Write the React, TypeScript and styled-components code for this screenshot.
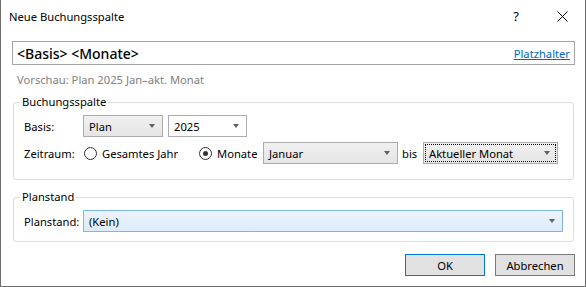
import React from "react";
import styled, { createGlobalStyle } from "styled-components";

const GlobalStyle = createGlobalStyle`
  html, body {
    margin: 0;
    padding: 0;
    background: #ffffff;
  }
  body {
    font-family: "Noto Sans", "Liberation Sans", sans-serif;
    font-size: 11.2px;
    color: #000000;
  }
`;

type Variant = "gray" | "white" | "hot";

export default function App() {
  return (
    <>
      <GlobalStyle />
      <Window>
        {/* title bar */}
        <TitleBar>
          <Title>Neue Buchungsspalte</Title>
          <CaptionButton>?</CaptionButton>
          <CaptionButton>
            <svg width="11" height="11" viewBox="0 0 11 11">
              <path d="M0.5 0.5 L10.5 10.5 M10.5 0.5 L0.5 10.5" stroke="#000" strokeWidth="1" fill="none" />
            </svg>
          </CaptionButton>
        </TitleBar>

        <Content>
          {/* template */}
          <TemplateBox>
            <TemplateText>&lt;Basis&gt; &lt;Monate&gt;</TemplateText>
            <Link>Platzhalter</Link>
          </TemplateBox>
          <Preview>Vorschau: Plan 2025 Jan–akt. Monat</Preview>

          {/* group: Buchungsspalte */}
          <Group $pad="5px 10px 15px 10px" $top={6}>
            <Legend>Buchungsspalte</Legend>
            <Row>
              <FieldLabel>Basis:</FieldLabel>
              <ComboPair>
                <ComboBox $variant="gray" $width={80}>
                  Plan
                  <Arrow />
                </ComboBox>
                <ComboBox $variant="white" $width={79}>
                  2025
                  <Arrow />
                </ComboBox>
              </ComboPair>
            </Row>
            <Row $top={5}>
              <FieldLabel>Zeitraum:</FieldLabel>
              <RadioOption $width={115} $indent={1}>
                <Radio />
                Gesamtes Jahr
              </RadioOption>
              <RadioOption $width={64}>
                <Radio $checked />
                Monate
              </RadioOption>
              <ComboBox $variant="gray" $width={135}>
                Januar
                <Arrow />
              </ComboBox>
              <Bis>bis</Bis>
              <ComboBox $variant="gray" $width={135} $focus>
                Aktueller Monat
                <Arrow />
              </ComboBox>
            </Row>
          </Group>

          {/* group: Planstand */}
          <Group $pad="5px 10px 9px 10px" $top={9}>
            <Legend>Planstand</Legend>
            <Row>
              <FieldLabel>Planstand:</FieldLabel>
              <ComboBox $variant="hot">
                (Kein)
                <Arrow />
              </ComboBox>
            </Row>
          </Group>

          <ButtonRow>
            <DialogButton $default>OK</DialogButton>
            <DialogButton>Abbrechen</DialogButton>
          </ButtonRow>
        </Content>
      </Window>
    </>
  );
}

const Window = styled.div`
  box-sizing: border-box;
  width: 586px;
  height: 287px;
  background: #ffffff;
  border: 1px solid #6e6e6e;
  border-top: none;
  display: flex;
  flex-direction: column;
`;

const TitleBar = styled.div`
  height: 32px;
  display: flex;
  align-items: center;
  padding-left: 8px;
`;

const Title = styled.div`
  flex: 1;
  color: #000;
`;

const CaptionButton = styled.div`
  width: 46px;
  height: 32px;
  display: flex;
  align-items: center;
  justify-content: center;
  font-size: 13px;
  color: #000;
`;

const Content = styled.div`
  display: flex;
  flex-direction: column;
  padding: 9px 10px 0 11px;
`;

const TemplateBox = styled.div`
  box-sizing: border-box;
  height: 24px;
  display: flex;
  align-items: center;
  justify-content: space-between;
  border: 1px solid #a5a5a5;
  padding: 0 4px;
`;

const TemplateText = styled.span`
  font-size: 14px;
  font-weight: 500;
  color: #000;
`;

const Link = styled.span`
  color: #0066cc;
  text-decoration: underline;
`;

const Preview = styled.div`
  margin-top: 7px;
  margin-left: 5px;
  height: 16px;
  line-height: 16px;
  color: #808080;
`;

const Group = styled.fieldset<{ $pad: string; $top: number }>`
  margin: ${(p) => p.$top}px 1px 0 1px;
  padding: ${(p) => p.$pad};
  border: 1px solid #dcdcdc;
  border-radius: 3px;
  min-width: 0;
`;

const Legend = styled.legend`
  margin-left: -4px;
  padding: 0 2px;
  height: 16px;
  line-height: 16px;
  color: #000;
`;

const Row = styled.div<{ $top?: number }>`
  display: flex;
  align-items: center;
  margin-top: ${(p) => p.$top ?? 0}px;
`;

const FieldLabel = styled.span`
  width: 59px;
  flex: none;
`;

const ComboPair = styled.div`
  display: flex;
  gap: 5px;
`;

const ComboBox = styled.div<{ $variant: Variant; $width?: number; $focus?: boolean }>`
  position: relative;
  box-sizing: border-box;
  height: 22px;
  width: ${(p) => (p.$width ? `${p.$width}px` : "auto")};
  flex: ${(p) => (p.$width ? "none" : "1")};
  display: flex;
  align-items: center;
  padding: 0 7px 0 5px;
  border: 1px solid ${(p) => (p.$variant === "hot" ? "#7eb4ea" : p.$variant === "white" ? "#abadb3" : "#acacac")};
  background: ${(p) =>
    p.$variant === "hot"
      ? "linear-gradient(#ecf4fc, #dcecfc)"
      : p.$variant === "white"
      ? "#ffffff"
      : "linear-gradient(#f0f0f0, #e5e5e5)"};

  &::before {
    content: "";
    display: ${(p) => (p.$focus ? "block" : "none")};
    position: absolute;
    inset: 1px;
    border: 1px dotted #000;
  }
`;

const Arrow = styled.span`
  margin-left: auto;
  width: 0;
  height: 0;
  border-left: 3px solid transparent;
  border-right: 3px solid transparent;
  border-top: 4px solid #606060;
`;

const RadioOption = styled.span<{ $width: number; $indent?: number }>`
  display: flex;
  align-items: center;
  gap: 5px;
  box-sizing: border-box;
  width: ${(p) => p.$width}px;
  flex: none;
  margin-left: ${(p) => p.$indent ?? 0}px;
`;

const Radio = styled.span<{ $checked?: boolean }>`
  box-sizing: border-box;
  width: 13px;
  height: 13px;
  border-radius: 50%;
  border: 1px solid #333333;
  display: inline-flex;
  align-items: center;
  justify-content: center;

  &::after {
    content: "";
    display: ${(p) => (p.$checked ? "block" : "none")};
    width: 5px;
    height: 5px;
    border-radius: 50%;
    background: #333333;
  }
`;

const Bis = styled.span`
  box-sizing: border-box;
  width: 25px;
  flex: none;
  padding-left: 4px;
`;

const ButtonRow = styled.div`
  display: flex;
  justify-content: flex-end;
  gap: 10px;
  margin-top: 12px;
`;

const DialogButton = styled.div<{ $default?: boolean }>`
  box-sizing: border-box;
  width: 80px;
  height: 22px;
  display: flex;
  align-items: center;
  justify-content: center;
  background: #e1e1e1;
  border: 1px solid ${(p) => (p.$default ? "#0078d7" : "#7a7a7a")};
  color: #000;
`;
